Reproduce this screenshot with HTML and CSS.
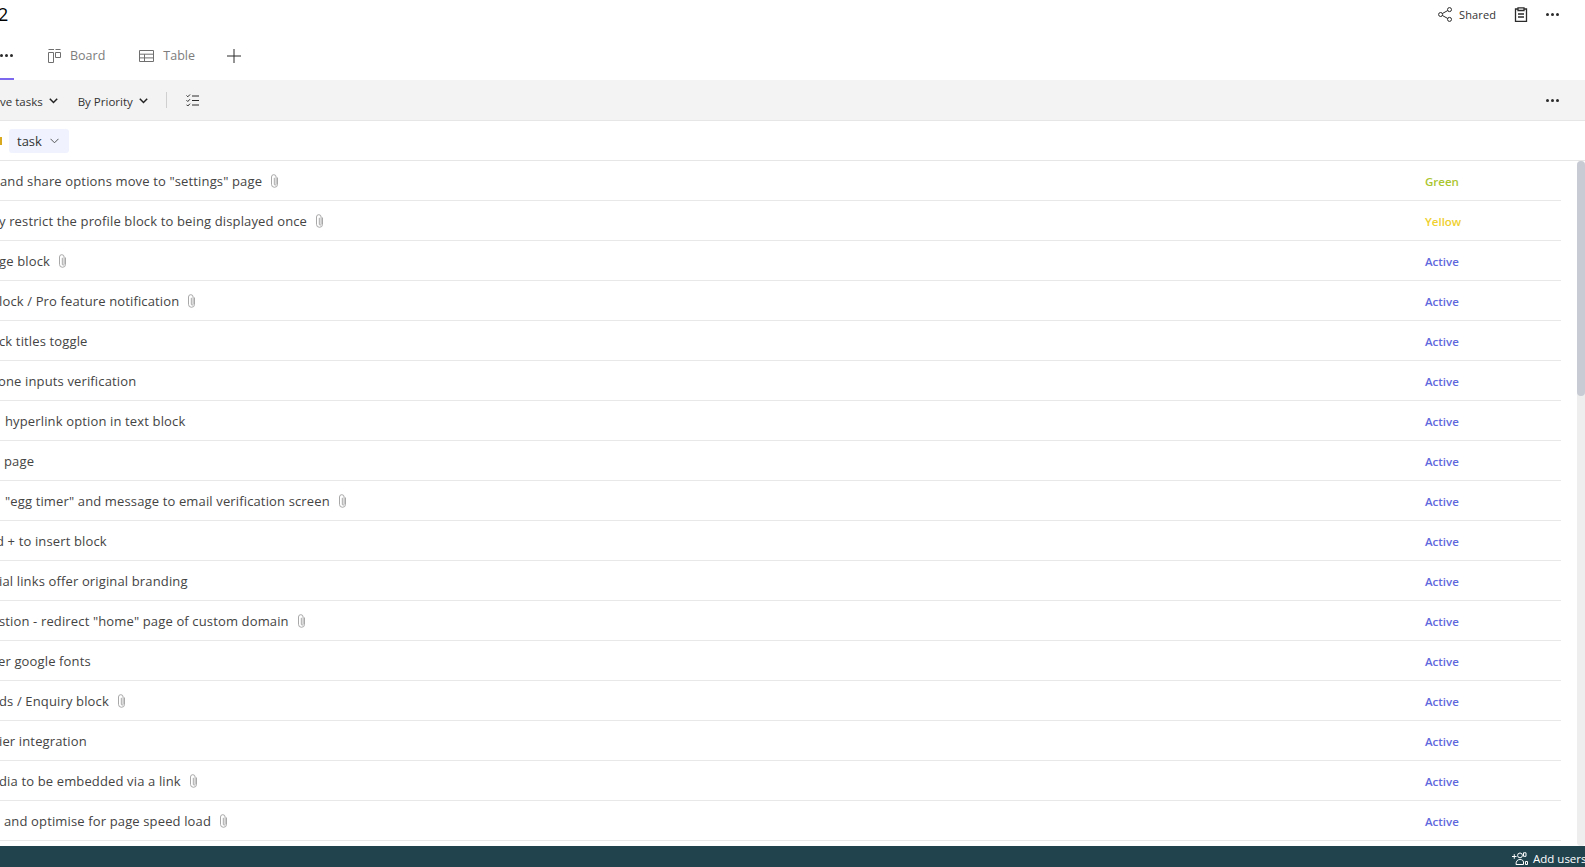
FILE: index.html
```html
<!DOCTYPE html>
<html lang="en">
<head>
  <meta charset="UTF-8" />
  <title>Tasks</title>
  <link rel="stylesheet" href="styles.css">
</head>
<body>
  <div class="page">
    <!-- title bar -->
    <header class="top-bar">
      <h1 class="board-name">2</h1>
      <div class="top-actions">
        <span class="shared">
          <svg class="icon" width="14" height="15" viewBox="0 0 14 15"><circle cx="2.600" cy="7.500" r="2"/><circle cx="11.500" cy="2.600" r="2"/><circle cx="11.500" cy="12.400" r="2"/><path d="M4.400 6.500l5.400-3M4.400 8.500l5.400 3"/></svg>
          Shared
        </span>
        <svg class="icon icon-bold" width="14" height="15" viewBox="0 0 14 15"><path d="M4 2H1.500v12.500h11V2H10M4 .8h6v2.700H4zM4 7h6M4 10h6"/></svg>
        <span class="dots"><i></i><i></i><i></i></span>
      </div>
    </header>

    <!-- view tabs -->
    <nav class="tabs">
      <span class="tab-current"><span class="dots"><i></i><i></i><i></i></span></span>
      <span class="tab">
        <svg class="icon icon-grey" width="13" height="14" viewBox="0 0 13 14"><path d="M.5.500h5.500M7.500.500h5M.5 3.500h5v10h-5zM7.500 3.500h5v5h-5z"/></svg>
        Board
      </span>
      <span class="tab tab-table">
        <svg class="icon icon-grey" width="15" height="12" viewBox="0 0 15 12"><path d="M.5.500h14v11H.5zM.5 4.200h14M.5 7.900h14M5.500 4.200v7.300"/></svg>
        Table
      </span>
      <svg class="icon add-view" width="14" height="14" viewBox="0 0 14 14"><path d="M7 0v14M0 7h14"/></svg>
    </nav>

    <!-- filters -->
    <div class="toolbar">
      <span class="filter filter-tasks">ve tasks <svg class="chev" width="9" height="6" viewBox="0 0 9 6"><path d="M.8.800l3.700 3.700L8.200.800"/></svg></span>
      <span class="filter">By Priority <svg class="chev" width="9" height="6" viewBox="0 0 9 6"><path d="M.8.800l3.700 3.700L8.200.800"/></svg></span>
      <span class="divider"></span>
      <svg class="icon" width="13" height="13" viewBox="0 0 13 13"><path d="M.5 1.500l1.300 1.300L4 .5M.5 6.200l1.300 1.300L4 5.200M.5 10.700L1.800 12 4 9.700M6 2h7M6 6.500h7M6 11h7"/></svg>
      <span class="dots toolbar-dots"><i></i><i></i><i></i></span>
    </div>

    <!-- new task -->
    <div class="new-task">
      <span class="new-task-mark"></span>
      <span class="new-task-btn">task <svg class="chev chev-thin" width="9" height="6" viewBox="0 0 9 6"><path d="M.5.800l4 4 4-4"/></svg></span>
    </div>

    <div class="list-area">
      <div class="rows" id="rows"></div>
      <div class="scrollbar"><div class="scroll-thumb"></div></div>
    </div>

    <footer class="bottom-bar">
      <svg class="icon icon-white" width="16" height="13" viewBox="0 0 16 13"><path d="M0 4.500h4.500M2.250 2.200v4.600M8 1a2.300 2.300 0 1 1 0 4.800A2.300 2.300 0 0 1 8 1zM4 12.500c0-3.500 1.500-5 4-5s3 1 3.500 2.500v2.500zM11.500.8h2.500v3.500h-2.500zM13.500 9.500h2v3h-2z"/></svg>
      <span>Add users</span>
    </footer>
  </div>

  <script>
    // [visible title, left offset class, has attachment, status]
    const tasks = [
      ["and share options move to \"settings\" page", "off-0", true, "Green"],
      ["y restrict the profile block to being displayed once", "off-m1", true, "Yellow"],
      ["ge block", "off-m1", true, "Active"],
      ["lock / Pro feature notification", "off-m1", true, "Active"],
      ["ck titles toggle", "off-m1", false, "Active"],
      ["one inputs verification", "off-m2", false, "Active"],
      ["hyperlink option in text block", "off-5", false, "Active"],
      ["page", "off-4", false, "Active"],
      ["\"egg timer\" and message to email verification screen", "off-5", true, "Active"],
      ["d + to insert block", "off-m4", false, "Active"],
      ["ial links offer original branding", "off-m1", false, "Active"],
      ["stion - redirect \"home\" page of custom domain", "off-m1", true, "Active"],
      ["er google fonts", "off-m2", false, "Active"],
      ["ds / Enquiry block", "off-m1", true, "Active"],
      ["ier integration", "off-m1", false, "Active"],
      ["dia to be embedded via a link", "off-m1", true, "Active"],
      ["and optimise for page speed load", "off-4", true, "Active"],
    ];

    const clip = '<svg class="clip" width="9" height="14" viewBox="0 0 9 14"><path d="M7.500 3.500v6.800a3 3 0 0 1-6 0V3a2.300 2.300 0 0 1 4.600 0v7.200a.9.900 0 0 1-1.800 0V3.800"/></svg>';

    document.getElementById("rows").innerHTML = tasks.map((t) => `
      <div class="row">
        <span class="row-title ${t[1]}">${t[0]}</span>${t[2] ? clip : ""}
        <span class="status status-${t[3].toLowerCase()}">${t[3]}</span>
      </div>`).join("");
  </script>
</body>
</html>
```

FILE: styles.css
```css
* {
  box-sizing: border-box;
}

html, body {
  margin: 0;
  height: 100%;
  overflow: hidden;
}

body {
  background: #fff;
  color: #333;
  font-family: "Open Sans", "Noto Sans", sans-serif;
  font-size: 13px;
}

.page {
  display: flex;
  flex-direction: column;
  height: 867px;
  overflow: hidden;
}

.icon {
  fill: none;
  stroke: #2b2b2b;
  stroke-width: 1;
  flex: none;
}
.icon-grey { stroke: #6f6f6f; }
.icon-white { stroke: #fff; }
.icon-bold { stroke-width: 1.300; }

.dots {
  display: inline-flex;
  gap: 2px;
}
.dots i {
  width: 3px;
  height: 3px;
  border-radius: 50%;
  background: #2b2b2b;
}

/* title bar */
.top-bar {
  display: flex;
  justify-content: space-between;
  align-items: flex-start;
  height: 40px;
}
.board-name {
  margin: 2px 0 0 -2px;
  font-size: 18px;
  font-weight: 400;
  color: #000;
  line-height: 24px;
}
.top-actions {
  display: flex;
  align-items: center;
  gap: 18px;
  height: 28px;
  padding-right: 26px;
}
.shared {
  display: flex;
  align-items: center;
  gap: 7px;
  font-size: 11px;
  letter-spacing: 0.100px;
  color: #333;
}

/* tabs */
.tabs {
  display: flex;
  align-items: center;
  height: 40px;
}
.tab-current {
  display: flex;
  align-items: center;
  width: 14px;
  height: 40px;
  padding-bottom: 8px;
  border-bottom: 2px solid #7b68ee;
}
.tab {
  display: flex;
  align-items: center;
  gap: 9px;
  margin-left: 34px;
  padding-bottom: 9px;
  font-size: 12.500px;
  color: #7d7d7d;
}
.add-view {
  margin-left: 32px;
  margin-bottom: 9px;
}

/* toolbar */
.toolbar {
  display: flex;
  align-items: center;
  height: 41px;
  background: #f3f3f3;
  border-bottom: 1px solid #e6e6e6;
  padding-right: 26px;
  font-size: 11.500px;
}
.filter {
  display: flex;
  align-items: center;
  gap: 6px;
  padding-top: 2px;
  white-space: nowrap;
}
.filter-tasks {
  margin-right: 20px;
}
.chev {
  fill: none;
  stroke: #222;
  stroke-width: 1.500;
}
.chev-thin {
  stroke: #555;
  stroke-width: 1;
}
.divider {
  width: 1px;
  height: 16px;
  background: #cfcfcf;
  margin: 0 19px 0 18px;
}
.toolbar-dots {
  margin-left: auto;
}

/* new task */
.new-task {
  display: flex;
  align-items: center;
  height: 40px;
  flex: none;
  border-bottom: 1px solid #e6e6e6;
}
.new-task-mark {
  width: 2px;
  height: 8px;
  background: #d8a81f;
  margin-right: 7px;
}
.new-task-btn {
  display: flex;
  align-items: center;
  gap: 8px;
  width: 60px;
  height: 24px;
  padding-left: 8px;
  background: #f0f3fe;
  border-radius: 3px;
  font-size: 13px;
  color: #333;
}

/* list */
.list-area {
  display: flex;
  flex: 1;
  min-height: 0;
}
.rows {
  flex: none;
  width: 1561px;
  overflow: hidden;
}
.row {
  display: flex;
  align-items: center;
  height: 40px;
  border-bottom: 1px solid #e8e8e8;
  white-space: nowrap;
}
.row-title {
  color: #444;
  letter-spacing: 0.140px;
}
.off-0 { margin-left: 0; }
.off-m1 { margin-left: -1px; }
.off-m2 { margin-left: -2px; }
.off-m4 { margin-left: -4px; }
.off-4 { margin-left: 4px; }
.off-5 { margin-left: 5px; }
.clip {
  margin-left: 8px;
  fill: none;
  stroke: #a8a8a8;
  stroke-width: 1;
}
.status {
  margin-left: auto;
  width: 136px;
  padding-top: 1px;
  font-size: 11.500px;
  font-weight: 600;
}
.status-green { color: #aac52f; }
.status-yellow { color: #efd02f; }
.status-active { color: #5f69dd; }

.scrollbar {
  flex: none;
  width: 8px;
  margin-left: 16px;
  background: #eeeeee;
  border-radius: 4px;
}
.scroll-thumb {
  height: 235px;
  background: #c8cbd4;
  border-radius: 4px;
}

/* footer */
.bottom-bar {
  display: flex;
  align-items: center;
  justify-content: flex-end;
  gap: 5px;
  flex: none;
  height: 21px;
  padding-top: 3px;
  background: #20434e;
  color: #fff;
  font-size: 11.500px;
  white-space: nowrap;
  overflow: hidden;
}
.bottom-bar span {
  width: 52px;
  flex: none;
}
```
